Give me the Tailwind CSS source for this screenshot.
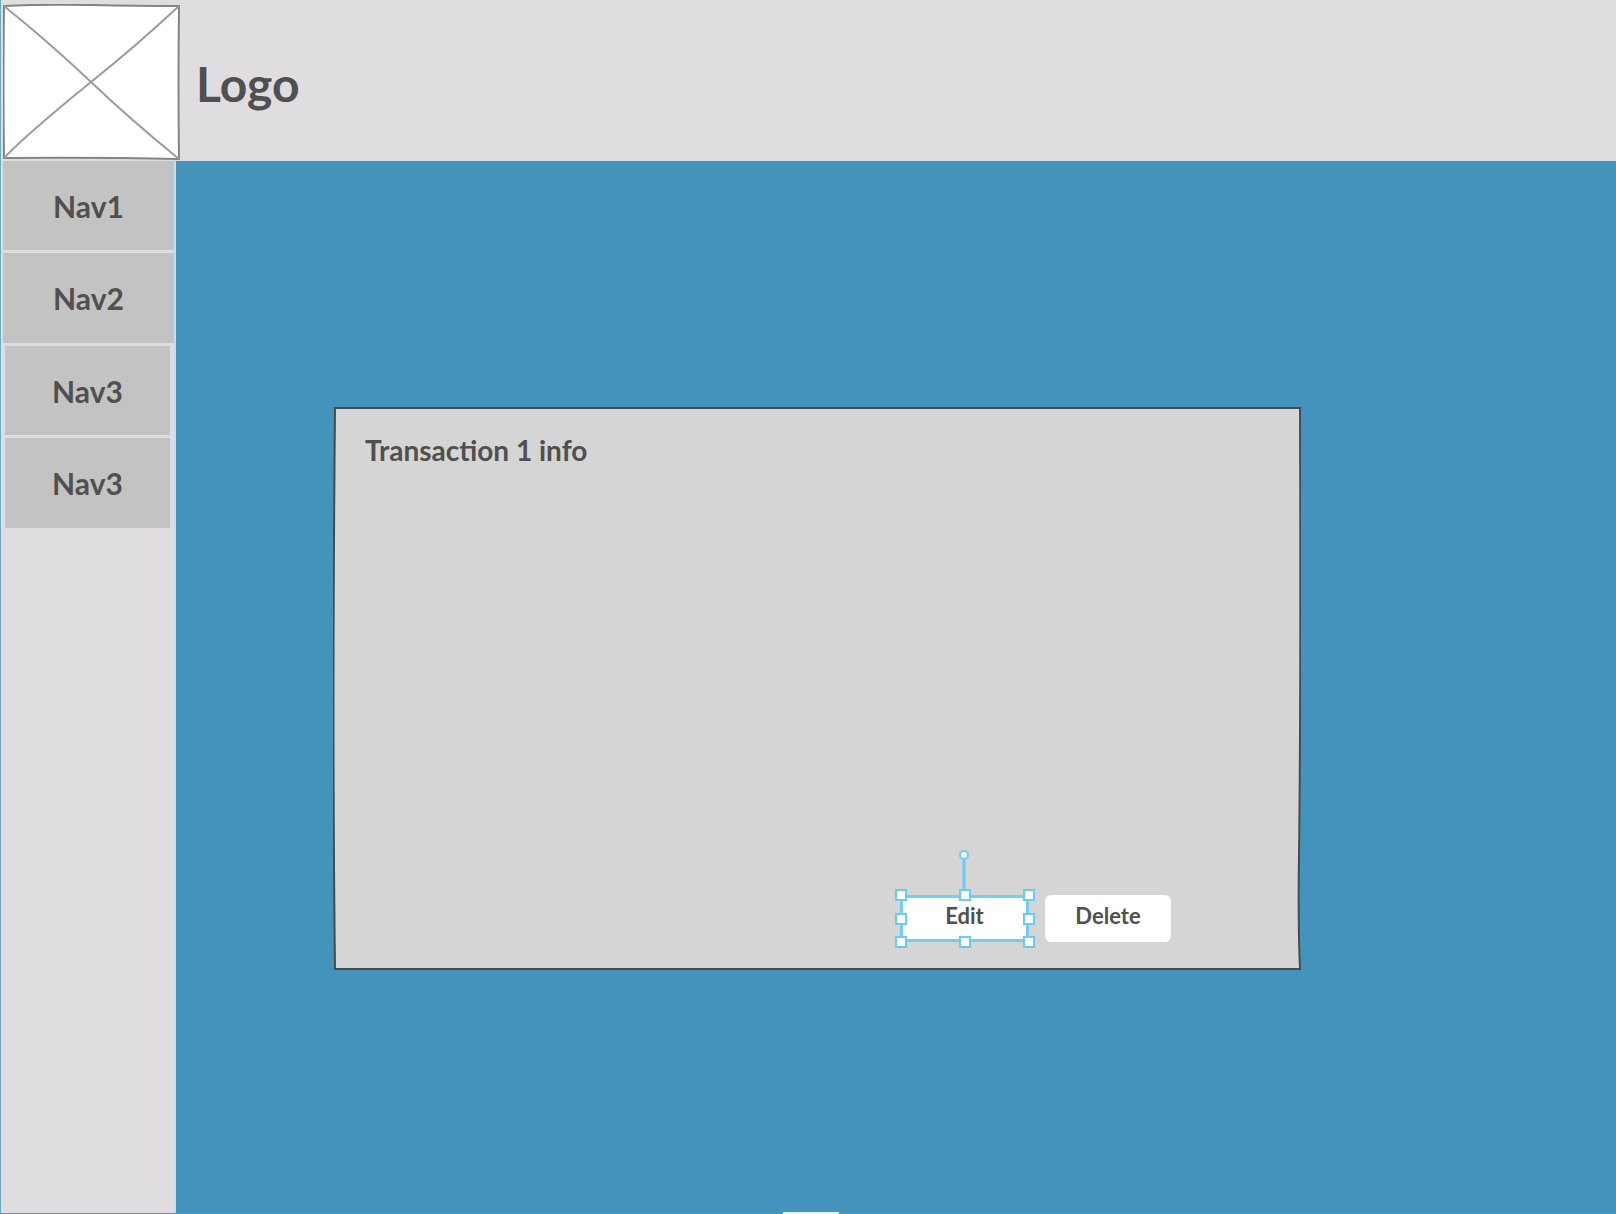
<!DOCTYPE html>
<html lang="en">
<head>
<meta charset="utf-8">
<title>Transaction info</title>
<script src="https://cdn.jsdelivr.net/npm/@tailwindcss/browser@4"></script>
</head>
<body class="relative flex min-h-screen flex-col border-l border-[#6fa9c6] bg-[#4493bc] font-['Lato',sans-serif] font-bold text-[#505050]">
  <header class="flex h-[161px] items-start gap-4 bg-[#e0dde1] pl-0.5 pt-1">
    <svg class="relative h-[156px] w-[177px] shrink-0" viewBox="0 0 177 156" fill="none" stroke="#848484" stroke-width="2" role="img" aria-label="Logo placeholder">
      <path d="M1 2Q40 0 88 1T176 2Q175 80 176 155Q90 153 1 154Q0 75 1 2Z" fill="#fff"/>
      <path d="M1 2Q48 40 88 78T176 155M176 2Q132 43 88 78Q25 129 1 154" stroke="#9c9c9c"/>
    </svg>
    <h1 class="pt-12 text-5xl leading-[64px]">Logo</h1>
  </header>
  <div class="flex flex-1">
    <nav class="flex w-[175px] shrink-0 flex-col gap-[3px] border-r-2 border-[#d2dbe2] bg-[#e0dde1] pl-0.5 text-3xl">
      <a href="#" class="flex h-[89px] items-center justify-center bg-[#c3c3c3]">Nav1</a>
      <a href="#" class="flex h-[90px] items-center justify-center bg-[#c3c3c3]">Nav2</a>
      <a href="#" class="mr-1 ml-0.5 flex h-[89px] items-center justify-center bg-[#c3c3c3]">Nav3</a>
      <a href="#" class="mr-1 ml-0.5 flex h-[90px] items-center justify-center bg-[#c3c3c3]">Nav3</a>
    </nav>
    <main class="flex-1 pt-[245px] pr-[315px] pl-[157px]">
      <section class="relative flex min-h-[564px] flex-col justify-between pt-7 pr-[130px] pb-7 pl-8">
        <svg class="absolute inset-0 h-full w-full" viewBox="0 0 968 564" preserveAspectRatio="none" aria-hidden="true">
          <path d="M2 2Q480 0 967 2Q968 290 966 450Q965 520 967 563Q500 561 2 563Q-1 320 2 2Z" fill="#d5d5d5" stroke="#454b4f" stroke-width="2"/>
        </svg>
        <h2 class="relative text-[28px] leading-8">Transaction 1 info</h2>
        <div class="relative flex justify-end gap-4 text-[22px] leading-6">
          <div class="relative">
            <button class="h-[47px] w-[129px] border-3 border-[#76cdf0] bg-white pb-1.5">Edit</button>
            <svg class="pointer-events-none absolute -top-[45px] -left-1.5 h-[100px] w-[142px]" viewBox="0 0 142 100" fill="#fff" stroke="#67cdf6" stroke-width="2" aria-hidden="true">
              <path d="M70 10V44" stroke-width="3"/>
              <circle cx="70" cy="5" r="4"/>
              <path d="M2 40h10v10H2zM66 40h10v10H66zM130 40h10v10h-10zM2 64h10v10H2zM130 64h10v10h-10zM2 87h10v10H2zM66 87h10v10H66zM130 87h10v10h-10z"/>
            </svg>
          </div>
          <button class="h-[47px] w-[126px] rounded-md bg-white pb-1.5">Delete</button>
        </div>
      </section>
    </main>
  </div>
  <div class="absolute bottom-0 left-0 h-px w-full bg-[#738f9e]"></div>
  <div class="absolute bottom-0 left-1/2 ml-0.5 h-0.5 w-14 -translate-x-1/2 bg-[#e5f0f5]"></div>
</body>
</html>
